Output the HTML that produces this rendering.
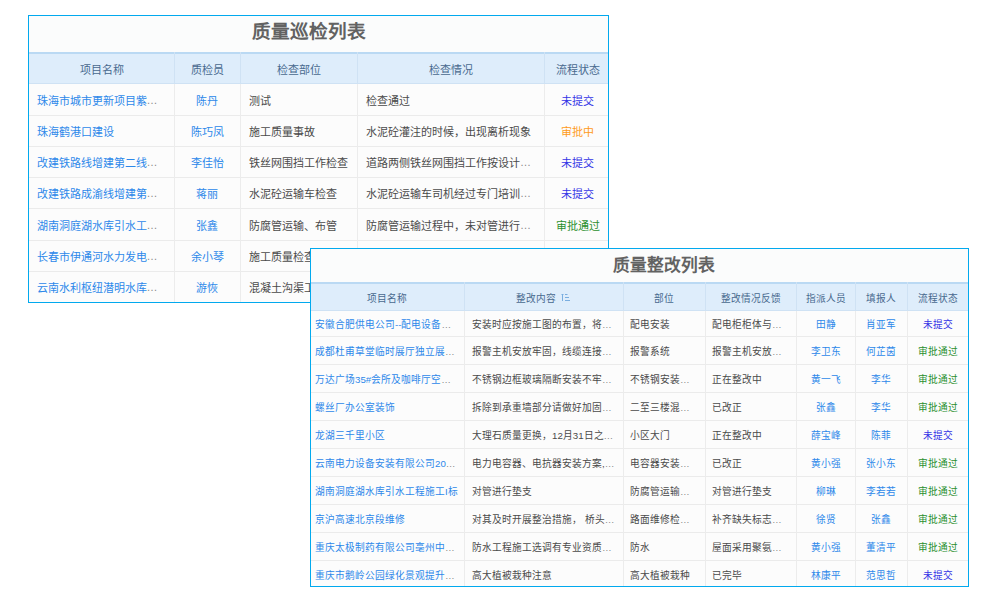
<!DOCTYPE html>
<html lang="zh-CN"><head><meta charset="utf-8"><style>
html,body{margin:0;padding:0;background:#fff;width:1000px;height:600px;overflow:hidden}
body{position:relative;font-family:"Liberation Sans",sans-serif}
div{position:absolute;box-sizing:border-box}
.c{display:flex;align-items:center;white-space:nowrap}
.el{color:#8a8a8a}
.sort{display:block;margin-left:5px;margin-top:-2px}
</style></head><body>
<div style="left:28px;top:15px;width:581px;height:288px;border:1px solid #02a9ee;box-sizing:border-box;background:#fcfcfc"></div>
<div style="left:29px;top:16px;width:579px;height:36px;background:#fbfcfc"></div>
<div class="c" style="left:252px;top:9.5px;height:40px;font-size:18.6px;font-weight:bold;color:#626262">质量巡检列表</div>
<div style="left:29px;top:52px;width:579px;height:31px;background:#deedfb"></div>
<div style="left:29px;top:52px;width:579px;height:2px;background:#bad9f3"></div>
<div style="left:29px;top:83px;width:579px;height:1px;background:#cfe2f4"></div>
<div style="left:29px;top:115px;width:579px;height:1px;background:#ebebeb"></div>
<div style="left:29px;top:146px;width:579px;height:1px;background:#ebebeb"></div>
<div style="left:29px;top:177px;width:579px;height:1px;background:#ebebeb"></div>
<div style="left:29px;top:208px;width:579px;height:1px;background:#ebebeb"></div>
<div style="left:29px;top:240px;width:579px;height:1px;background:#ebebeb"></div>
<div style="left:29px;top:271px;width:579px;height:1px;background:#ebebeb"></div>
<div style="left:174px;top:52px;width:1px;height:31px;background:#cfe2f4"></div>
<div style="left:174px;top:84px;width:1px;height:218px;background:#ececec"></div>
<div style="left:240px;top:52px;width:1px;height:31px;background:#cfe2f4"></div>
<div style="left:240px;top:84px;width:1px;height:218px;background:#ececec"></div>
<div style="left:357px;top:52px;width:1px;height:31px;background:#cfe2f4"></div>
<div style="left:357px;top:84px;width:1px;height:218px;background:#ececec"></div>
<div style="left:544px;top:52px;width:1px;height:31px;background:#cfe2f4"></div>
<div style="left:544px;top:84px;width:1px;height:218px;background:#ececec"></div>
<div class="c" style="left:29px;top:53.2px;width:145px;height:31px;font-size:11px;color:#48698e;justify-content:center;padding-left:0px;">项目名称</div>
<div class="c" style="left:174px;top:53.2px;width:66px;height:31px;font-size:11px;color:#48698e;justify-content:center;padding-left:0px;">质检员</div>
<div class="c" style="left:240px;top:53.2px;width:117px;height:31px;font-size:11px;color:#48698e;justify-content:center;padding-left:0px;">检查部位</div>
<div class="c" style="left:357px;top:53.2px;width:187px;height:31px;font-size:11px;color:#48698e;justify-content:center;padding-left:0px;">检查情况</div>
<div class="c" style="left:545.5px;top:53.2px;width:64px;height:31px;font-size:11px;color:#48698e;justify-content:center;padding-left:0px;">流程状态</div>
<div class="c" style="left:29px;top:83.6px;width:145px;height:32px;font-size:11px;color:#2d88ea;justify-content:flex-start;padding-left:7.5px;">珠海市城市更新项目紫<span class="el">…</span></div>
<div class="c" style="left:174px;top:83.6px;width:66px;height:32px;font-size:11px;color:#2d88ea;justify-content:center;padding-left:0px;">陈丹</div>
<div class="c" style="left:241px;top:83.6px;width:117px;height:32px;font-size:11px;color:#4a4a4a;justify-content:flex-start;padding-left:8px;">测试</div>
<div class="c" style="left:358px;top:83.6px;width:187px;height:32px;font-size:11px;color:#4a4a4a;justify-content:flex-start;padding-left:8px;">检查通过</div>
<div class="c" style="left:545.5px;top:83.6px;width:64px;height:32px;font-size:11px;color:#3434e6;justify-content:center;padding-left:0px;">未提交</div>
<div class="c" style="left:29px;top:115.6px;width:145px;height:31px;font-size:11px;color:#2d88ea;justify-content:flex-start;padding-left:7.5px;">珠海鹤港口建设</div>
<div class="c" style="left:174px;top:115.6px;width:66px;height:31px;font-size:11px;color:#2d88ea;justify-content:center;padding-left:0px;">陈巧凤</div>
<div class="c" style="left:241px;top:115.6px;width:117px;height:31px;font-size:11px;color:#4a4a4a;justify-content:flex-start;padding-left:8px;">施工质量事故</div>
<div class="c" style="left:358px;top:115.6px;width:187px;height:31px;font-size:11px;color:#4a4a4a;justify-content:flex-start;padding-left:8px;">水泥砼灌注的时候，出现离析现象</div>
<div class="c" style="left:545.5px;top:115.6px;width:64px;height:31px;font-size:11px;color:#ff9a1a;justify-content:center;padding-left:0px;">审批中</div>
<div class="c" style="left:29px;top:146.6px;width:145px;height:31px;font-size:11px;color:#2d88ea;justify-content:flex-start;padding-left:7.5px;">改建铁路线增建第二线<span class="el">…</span></div>
<div class="c" style="left:174px;top:146.6px;width:66px;height:31px;font-size:11px;color:#2d88ea;justify-content:center;padding-left:0px;">李佳怡</div>
<div class="c" style="left:241px;top:146.6px;width:117px;height:31px;font-size:11px;color:#4a4a4a;justify-content:flex-start;padding-left:8px;">铁丝网围挡工作检查</div>
<div class="c" style="left:358px;top:146.6px;width:187px;height:31px;font-size:11px;color:#4a4a4a;justify-content:flex-start;padding-left:8px;">道路两侧铁丝网围挡工作按设计<span class="el">…</span></div>
<div class="c" style="left:545.5px;top:146.6px;width:64px;height:31px;font-size:11px;color:#3434e6;justify-content:center;padding-left:0px;">未提交</div>
<div class="c" style="left:29px;top:177.6px;width:145px;height:31px;font-size:11px;color:#2d88ea;justify-content:flex-start;padding-left:7.5px;">改建铁路成渝线增建第<span class="el">…</span></div>
<div class="c" style="left:174px;top:177.6px;width:66px;height:31px;font-size:11px;color:#2d88ea;justify-content:center;padding-left:0px;">蒋丽</div>
<div class="c" style="left:241px;top:177.6px;width:117px;height:31px;font-size:11px;color:#4a4a4a;justify-content:flex-start;padding-left:8px;">水泥砼运输车检查</div>
<div class="c" style="left:358px;top:177.6px;width:187px;height:31px;font-size:11px;color:#4a4a4a;justify-content:flex-start;padding-left:8px;">水泥砼运输车司机经过专门培训<span class="el">…</span></div>
<div class="c" style="left:545.5px;top:177.6px;width:64px;height:31px;font-size:11px;color:#3434e6;justify-content:center;padding-left:0px;">未提交</div>
<div class="c" style="left:29px;top:208.6px;width:145px;height:32px;font-size:11px;color:#2d88ea;justify-content:flex-start;padding-left:7.5px;">湖南洞庭湖水库引水工<span class="el">…</span></div>
<div class="c" style="left:174px;top:208.6px;width:66px;height:32px;font-size:11px;color:#2d88ea;justify-content:center;padding-left:0px;">张鑫</div>
<div class="c" style="left:241px;top:208.6px;width:117px;height:32px;font-size:11px;color:#4a4a4a;justify-content:flex-start;padding-left:8px;">防腐管运输、布管</div>
<div class="c" style="left:358px;top:208.6px;width:187px;height:32px;font-size:11px;color:#4a4a4a;justify-content:flex-start;padding-left:8px;">防腐管运输过程中，未对管进行<span class="el">…</span></div>
<div class="c" style="left:545.5px;top:208.6px;width:64px;height:32px;font-size:11px;color:#2a8f2e;justify-content:center;padding-left:0px;">审批通过</div>
<div class="c" style="left:29px;top:240.6px;width:145px;height:31px;font-size:11px;color:#2d88ea;justify-content:flex-start;padding-left:7.5px;">长春市伊通河水力发电<span class="el">…</span></div>
<div class="c" style="left:174px;top:240.6px;width:66px;height:31px;font-size:11px;color:#2d88ea;justify-content:center;padding-left:0px;">余小琴</div>
<div class="c" style="left:241px;top:240.6px;width:117px;height:31px;font-size:11px;color:#4a4a4a;justify-content:flex-start;padding-left:8px;">施工质量检查</div>
<div class="c" style="left:358px;top:240.6px;width:187px;height:31px;font-size:11px;color:#4a4a4a;justify-content:flex-start;padding-left:8px;"></div>
<div class="c" style="left:545.5px;top:240.6px;width:64px;height:31px;font-size:11px;color:#000;justify-content:center;padding-left:0px;"></div>
<div class="c" style="left:29px;top:271.6px;width:145px;height:31px;font-size:11px;color:#2d88ea;justify-content:flex-start;padding-left:7.5px;">云南水利枢纽潜明水库<span class="el">…</span></div>
<div class="c" style="left:174px;top:271.6px;width:66px;height:31px;font-size:11px;color:#2d88ea;justify-content:center;padding-left:0px;">游恢</div>
<div class="c" style="left:241px;top:271.6px;width:117px;height:31px;font-size:11px;color:#4a4a4a;justify-content:flex-start;padding-left:8px;">混凝土沟渠工</div>
<div class="c" style="left:358px;top:271.6px;width:187px;height:31px;font-size:11px;color:#4a4a4a;justify-content:flex-start;padding-left:8px;"></div>
<div class="c" style="left:545.5px;top:271.6px;width:64px;height:31px;font-size:11px;color:#000;justify-content:center;padding-left:0px;"></div>
<div style="left:310px;top:248px;width:659px;height:339px;border:1px solid #02a9ee;box-sizing:border-box;background:#fcfcfc"></div>
<div style="left:311px;top:249px;width:657px;height:33px;background:#fbfcfc"></div>
<div class="c" style="left:613px;top:243.5px;height:40px;font-size:16.7px;font-weight:bold;color:#626262">质量整改列表</div>
<div style="left:311px;top:282px;width:657px;height:28px;background:#deedfb"></div>
<div style="left:311px;top:282px;width:657px;height:2px;background:#bad9f3"></div>
<div style="left:311px;top:310px;width:657px;height:1px;background:#cfe2f4"></div>
<div style="left:311px;top:336px;width:657px;height:1px;background:#ebebeb"></div>
<div style="left:311px;top:364px;width:657px;height:1px;background:#ebebeb"></div>
<div style="left:311px;top:392px;width:657px;height:1px;background:#ebebeb"></div>
<div style="left:311px;top:420px;width:657px;height:1px;background:#ebebeb"></div>
<div style="left:311px;top:448px;width:657px;height:1px;background:#ebebeb"></div>
<div style="left:311px;top:476px;width:657px;height:1px;background:#ebebeb"></div>
<div style="left:311px;top:504px;width:657px;height:1px;background:#ebebeb"></div>
<div style="left:311px;top:532px;width:657px;height:1px;background:#ebebeb"></div>
<div style="left:311px;top:560px;width:657px;height:1px;background:#ebebeb"></div>
<div style="left:464px;top:282px;width:1px;height:28px;background:#cfe2f4"></div>
<div style="left:464px;top:311px;width:1px;height:275px;background:#ececec"></div>
<div style="left:623px;top:282px;width:1px;height:28px;background:#cfe2f4"></div>
<div style="left:623px;top:311px;width:1px;height:275px;background:#ececec"></div>
<div style="left:705px;top:282px;width:1px;height:28px;background:#cfe2f4"></div>
<div style="left:705px;top:311px;width:1px;height:275px;background:#ececec"></div>
<div style="left:796px;top:282px;width:1px;height:28px;background:#cfe2f4"></div>
<div style="left:796px;top:311px;width:1px;height:275px;background:#ececec"></div>
<div style="left:855px;top:282px;width:1px;height:28px;background:#cfe2f4"></div>
<div style="left:855px;top:311px;width:1px;height:275px;background:#ececec"></div>
<div style="left:907px;top:282px;width:1px;height:28px;background:#cfe2f4"></div>
<div style="left:907px;top:311px;width:1px;height:275px;background:#ececec"></div>
<div class="c" style="left:310px;top:284px;width:153px;height:28px;font-size:9.7px;color:#48698e;justify-content:center;padding-left:0px;">项目名称</div>
<div class="c" style="left:464px;top:284px;width:159px;height:28px;font-size:9.7px;color:#48698e;justify-content:center;padding-left:0px;">整改内容<svg class="sort" width="10" height="9" viewBox="0 0 10 9"><path d="M1.5 1V8M0.5 2L1.5 1L2.5 2M4 1.5H6.5M4 4.5H8M4 7.5H9" stroke="#7aaee0" stroke-width="1" fill="none"/></svg></div>
<div class="c" style="left:623px;top:284px;width:82px;height:28px;font-size:9.7px;color:#48698e;justify-content:center;padding-left:0px;">部位</div>
<div class="c" style="left:705px;top:284px;width:91px;height:28px;font-size:9.7px;color:#48698e;justify-content:center;padding-left:0px;">整改情况反馈</div>
<div class="c" style="left:796px;top:284px;width:59px;height:28px;font-size:9.7px;color:#48698e;justify-content:center;padding-left:0px;">指派人员</div>
<div class="c" style="left:855px;top:284px;width:52px;height:28px;font-size:9.7px;color:#48698e;justify-content:center;padding-left:0px;">填报人</div>
<div class="c" style="left:907.5px;top:284px;width:61px;height:28px;font-size:9.7px;color:#48698e;justify-content:center;padding-left:0px;">流程状态</div>
<div class="c" style="left:310px;top:311px;width:153px;height:26px;font-size:9.7px;color:#2d88ea;justify-content:flex-start;padding-left:5px;">安徽合肥供电公司--配电设备<span class="el">…</span></div>
<div class="c" style="left:464px;top:311px;width:159px;height:26px;font-size:9.7px;color:#4a4a4a;justify-content:flex-start;padding-left:8px;">安装时应按施工图的布置，将<span class="el">…</span></div>
<div class="c" style="left:623px;top:311px;width:82px;height:26px;font-size:9.7px;color:#4a4a4a;justify-content:flex-start;padding-left:7px;">配电安装</div>
<div class="c" style="left:705px;top:311px;width:91px;height:26px;font-size:9.7px;color:#4a4a4a;justify-content:flex-start;padding-left:7px;">配电柜柜体与<span class="el">…</span></div>
<div class="c" style="left:796px;top:311px;width:59px;height:26px;font-size:9.7px;color:#2d88ea;justify-content:center;padding-left:0px;">田静</div>
<div class="c" style="left:855px;top:311px;width:52px;height:26px;font-size:9.7px;color:#2d88ea;justify-content:center;padding-left:0px;">肖亚军</div>
<div class="c" style="left:907.5px;top:311px;width:61px;height:26px;font-size:9.7px;color:#3434e6;justify-content:center;padding-left:0px;">未提交</div>
<div class="c" style="left:310px;top:337px;width:153px;height:28px;font-size:9.7px;color:#2d88ea;justify-content:flex-start;padding-left:5px;">成都杜甫草堂临时展厅独立展<span class="el">…</span></div>
<div class="c" style="left:464px;top:337px;width:159px;height:28px;font-size:9.7px;color:#4a4a4a;justify-content:flex-start;padding-left:8px;">报警主机安放牢固，线缆连接<span class="el">…</span></div>
<div class="c" style="left:623px;top:337px;width:82px;height:28px;font-size:9.7px;color:#4a4a4a;justify-content:flex-start;padding-left:7px;">报警系统</div>
<div class="c" style="left:705px;top:337px;width:91px;height:28px;font-size:9.7px;color:#4a4a4a;justify-content:flex-start;padding-left:7px;">报警主机安放<span class="el">…</span></div>
<div class="c" style="left:796px;top:337px;width:59px;height:28px;font-size:9.7px;color:#2d88ea;justify-content:center;padding-left:0px;">李卫东</div>
<div class="c" style="left:855px;top:337px;width:52px;height:28px;font-size:9.7px;color:#2d88ea;justify-content:center;padding-left:0px;">何芷茵</div>
<div class="c" style="left:907.5px;top:337px;width:61px;height:28px;font-size:9.7px;color:#2a8f2e;justify-content:center;padding-left:0px;">审批通过</div>
<div class="c" style="left:310px;top:365px;width:153px;height:28px;font-size:9.7px;color:#2d88ea;justify-content:flex-start;padding-left:5px;">万达广场35#会所及咖啡厅空<span class="el">…</span></div>
<div class="c" style="left:464px;top:365px;width:159px;height:28px;font-size:9.7px;color:#4a4a4a;justify-content:flex-start;padding-left:8px;">不锈钢边框玻璃隔断安装不牢<span class="el">…</span></div>
<div class="c" style="left:623px;top:365px;width:82px;height:28px;font-size:9.7px;color:#4a4a4a;justify-content:flex-start;padding-left:7px;">不锈钢安装<span class="el">…</span></div>
<div class="c" style="left:705px;top:365px;width:91px;height:28px;font-size:9.7px;color:#4a4a4a;justify-content:flex-start;padding-left:7px;">正在整改中</div>
<div class="c" style="left:796px;top:365px;width:59px;height:28px;font-size:9.7px;color:#2d88ea;justify-content:center;padding-left:0px;">黄一飞</div>
<div class="c" style="left:855px;top:365px;width:52px;height:28px;font-size:9.7px;color:#2d88ea;justify-content:center;padding-left:0px;">李华</div>
<div class="c" style="left:907.5px;top:365px;width:61px;height:28px;font-size:9.7px;color:#2a8f2e;justify-content:center;padding-left:0px;">审批通过</div>
<div class="c" style="left:310px;top:393px;width:153px;height:28px;font-size:9.7px;color:#2d88ea;justify-content:flex-start;padding-left:5px;">螺丝厂办公室装饰</div>
<div class="c" style="left:464px;top:393px;width:159px;height:28px;font-size:9.7px;color:#4a4a4a;justify-content:flex-start;padding-left:8px;">拆除到承重墙部分请做好加固<span class="el">…</span></div>
<div class="c" style="left:623px;top:393px;width:82px;height:28px;font-size:9.7px;color:#4a4a4a;justify-content:flex-start;padding-left:7px;">二至三楼混<span class="el">…</span></div>
<div class="c" style="left:705px;top:393px;width:91px;height:28px;font-size:9.7px;color:#4a4a4a;justify-content:flex-start;padding-left:7px;">已改正</div>
<div class="c" style="left:796px;top:393px;width:59px;height:28px;font-size:9.7px;color:#2d88ea;justify-content:center;padding-left:0px;">张鑫</div>
<div class="c" style="left:855px;top:393px;width:52px;height:28px;font-size:9.7px;color:#2d88ea;justify-content:center;padding-left:0px;">李华</div>
<div class="c" style="left:907.5px;top:393px;width:61px;height:28px;font-size:9.7px;color:#2a8f2e;justify-content:center;padding-left:0px;">审批通过</div>
<div class="c" style="left:310px;top:421px;width:153px;height:28px;font-size:9.7px;color:#2d88ea;justify-content:flex-start;padding-left:5px;">龙湖三千里小区</div>
<div class="c" style="left:464px;top:421px;width:159px;height:28px;font-size:9.7px;color:#4a4a4a;justify-content:flex-start;padding-left:8px;">大理石质量更换，12月31日之<span class="el">…</span></div>
<div class="c" style="left:623px;top:421px;width:82px;height:28px;font-size:9.7px;color:#4a4a4a;justify-content:flex-start;padding-left:7px;">小区大门</div>
<div class="c" style="left:705px;top:421px;width:91px;height:28px;font-size:9.7px;color:#4a4a4a;justify-content:flex-start;padding-left:7px;">正在整改中</div>
<div class="c" style="left:796px;top:421px;width:59px;height:28px;font-size:9.7px;color:#2d88ea;justify-content:center;padding-left:0px;">薛宝峰</div>
<div class="c" style="left:855px;top:421px;width:52px;height:28px;font-size:9.7px;color:#2d88ea;justify-content:center;padding-left:0px;">陈菲</div>
<div class="c" style="left:907.5px;top:421px;width:61px;height:28px;font-size:9.7px;color:#3434e6;justify-content:center;padding-left:0px;">未提交</div>
<div class="c" style="left:310px;top:449px;width:153px;height:28px;font-size:9.7px;color:#2d88ea;justify-content:flex-start;padding-left:5px;">云南电力设备安装有限公司20<span class="el">…</span></div>
<div class="c" style="left:464px;top:449px;width:159px;height:28px;font-size:9.7px;color:#4a4a4a;justify-content:flex-start;padding-left:8px;">电力电容器、电抗器安装方案,<span class="el">…</span></div>
<div class="c" style="left:623px;top:449px;width:82px;height:28px;font-size:9.7px;color:#4a4a4a;justify-content:flex-start;padding-left:7px;">电容器安装<span class="el">…</span></div>
<div class="c" style="left:705px;top:449px;width:91px;height:28px;font-size:9.7px;color:#4a4a4a;justify-content:flex-start;padding-left:7px;">已改正</div>
<div class="c" style="left:796px;top:449px;width:59px;height:28px;font-size:9.7px;color:#2d88ea;justify-content:center;padding-left:0px;">黄小强</div>
<div class="c" style="left:855px;top:449px;width:52px;height:28px;font-size:9.7px;color:#2d88ea;justify-content:center;padding-left:0px;">张小东</div>
<div class="c" style="left:907.5px;top:449px;width:61px;height:28px;font-size:9.7px;color:#2a8f2e;justify-content:center;padding-left:0px;">审批通过</div>
<div class="c" style="left:310px;top:477px;width:153px;height:28px;font-size:9.7px;color:#2d88ea;justify-content:flex-start;padding-left:5px;">湖南洞庭湖水库引水工程施工I标</div>
<div class="c" style="left:464px;top:477px;width:159px;height:28px;font-size:9.7px;color:#4a4a4a;justify-content:flex-start;padding-left:8px;">对管进行垫支</div>
<div class="c" style="left:623px;top:477px;width:82px;height:28px;font-size:9.7px;color:#4a4a4a;justify-content:flex-start;padding-left:7px;">防腐管运输<span class="el">…</span></div>
<div class="c" style="left:705px;top:477px;width:91px;height:28px;font-size:9.7px;color:#4a4a4a;justify-content:flex-start;padding-left:7px;">对管进行垫支</div>
<div class="c" style="left:796px;top:477px;width:59px;height:28px;font-size:9.7px;color:#2d88ea;justify-content:center;padding-left:0px;">柳琳</div>
<div class="c" style="left:855px;top:477px;width:52px;height:28px;font-size:9.7px;color:#2d88ea;justify-content:center;padding-left:0px;">李若若</div>
<div class="c" style="left:907.5px;top:477px;width:61px;height:28px;font-size:9.7px;color:#2a8f2e;justify-content:center;padding-left:0px;">审批通过</div>
<div class="c" style="left:310px;top:505px;width:153px;height:28px;font-size:9.7px;color:#2d88ea;justify-content:flex-start;padding-left:5px;">京沪高速北京段维修</div>
<div class="c" style="left:464px;top:505px;width:159px;height:28px;font-size:9.7px;color:#4a4a4a;justify-content:flex-start;padding-left:8px;">对其及时开展整治措施， 桥头<span class="el">…</span></div>
<div class="c" style="left:623px;top:505px;width:82px;height:28px;font-size:9.7px;color:#4a4a4a;justify-content:flex-start;padding-left:7px;">路面维修检<span class="el">…</span></div>
<div class="c" style="left:705px;top:505px;width:91px;height:28px;font-size:9.7px;color:#4a4a4a;justify-content:flex-start;padding-left:7px;">补齐缺失标志<span class="el">…</span></div>
<div class="c" style="left:796px;top:505px;width:59px;height:28px;font-size:9.7px;color:#2d88ea;justify-content:center;padding-left:0px;">徐贤</div>
<div class="c" style="left:855px;top:505px;width:52px;height:28px;font-size:9.7px;color:#2d88ea;justify-content:center;padding-left:0px;">张鑫</div>
<div class="c" style="left:907.5px;top:505px;width:61px;height:28px;font-size:9.7px;color:#2a8f2e;justify-content:center;padding-left:0px;">审批通过</div>
<div class="c" style="left:310px;top:533px;width:153px;height:28px;font-size:9.7px;color:#2d88ea;justify-content:flex-start;padding-left:5px;">重庆太极制药有限公司亳州中<span class="el">…</span></div>
<div class="c" style="left:464px;top:533px;width:159px;height:28px;font-size:9.7px;color:#4a4a4a;justify-content:flex-start;padding-left:8px;">防水工程施工选调有专业资质<span class="el">…</span></div>
<div class="c" style="left:623px;top:533px;width:82px;height:28px;font-size:9.7px;color:#4a4a4a;justify-content:flex-start;padding-left:7px;">防水</div>
<div class="c" style="left:705px;top:533px;width:91px;height:28px;font-size:9.7px;color:#4a4a4a;justify-content:flex-start;padding-left:7px;">屋面采用聚氨<span class="el">…</span></div>
<div class="c" style="left:796px;top:533px;width:59px;height:28px;font-size:9.7px;color:#2d88ea;justify-content:center;padding-left:0px;">黄小强</div>
<div class="c" style="left:855px;top:533px;width:52px;height:28px;font-size:9.7px;color:#2d88ea;justify-content:center;padding-left:0px;">董清平</div>
<div class="c" style="left:907.5px;top:533px;width:61px;height:28px;font-size:9.7px;color:#2a8f2e;justify-content:center;padding-left:0px;">审批通过</div>
<div class="c" style="left:310px;top:562px;width:153px;height:26px;font-size:9.7px;color:#2d88ea;justify-content:flex-start;padding-left:5px;">重庆市鹅岭公园绿化景观提升<span class="el">…</span></div>
<div class="c" style="left:464px;top:562px;width:159px;height:26px;font-size:9.7px;color:#4a4a4a;justify-content:flex-start;padding-left:8px;">高大植被栽种注意</div>
<div class="c" style="left:623px;top:562px;width:82px;height:26px;font-size:9.7px;color:#4a4a4a;justify-content:flex-start;padding-left:7px;">高大植被栽种</div>
<div class="c" style="left:705px;top:562px;width:91px;height:26px;font-size:9.7px;color:#4a4a4a;justify-content:flex-start;padding-left:7px;">已完毕</div>
<div class="c" style="left:796px;top:562px;width:59px;height:26px;font-size:9.7px;color:#2d88ea;justify-content:center;padding-left:0px;">林康平</div>
<div class="c" style="left:855px;top:562px;width:52px;height:26px;font-size:9.7px;color:#2d88ea;justify-content:center;padding-left:0px;">范思哲</div>
<div class="c" style="left:907.5px;top:562px;width:61px;height:26px;font-size:9.7px;color:#3434e6;justify-content:center;padding-left:0px;">未提交</div>
</body></html>
